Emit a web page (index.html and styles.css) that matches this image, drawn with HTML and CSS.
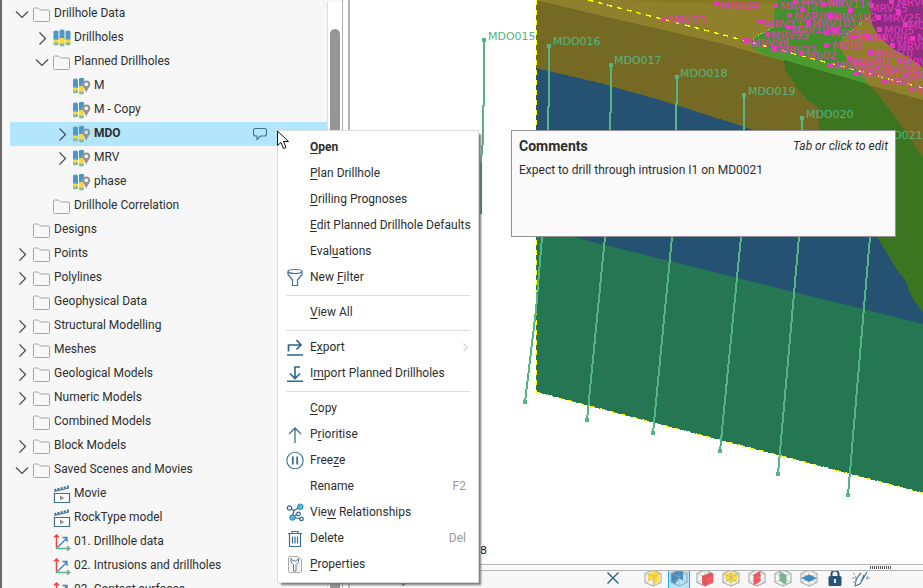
FILE: index.html
```html
<!DOCTYPE html>
<html lang="en">
<head>
<meta charset="utf-8">
<title>Drillhole project</title>
<link rel="stylesheet" href="styles.css">
</head>
<body>
<svg class="defs" aria-hidden="true">
  <symbol id="right" viewBox="0 0 16 16"><path d="M5.500 2.500l6 6-6 6" fill="none" stroke="#4a4a4a" stroke-width="1.200"/></symbol>
  <symbol id="down" viewBox="0 0 16 16"><path d="M2 5.500l6 6 6-6" fill="none" stroke="#4a4a4a" stroke-width="1.200"/></symbol>
  <symbol id="folder" viewBox="0 0 18 18"><path d="M.500 14.500V4q0-1 1-1h4l2 2h8q1 0 1 1V15.500q0 1-1 1h-14q-1 0-1-1z" fill="none" stroke="#a6a6a6"/></symbol>
  <symbol id="holes" viewBox="0 0 18 18">
    <path d="M.500 2.500q2.500-2 5 0V11h-5zM6.500 1.500q2.500-2 5 0V11h-5zM12.500 2.500q2.500-2 5 0V11h-5z" fill="#4f97c6"/>
    <path d="M.500 10.500h5v3.500h-5zM6.500 9h5v6h-5zM12.500 10.500h5v3.500h-5z" fill="#fbd93c"/>
    <path d="M.500 13.500h5v2q-2.500 2-5 0zM6.500 14.500h5v2q-2.500 2-5 0zM12.500 13.500h5v2q-2.500 2-5 0z" fill="#85bb98"/>
  </symbol>
  <symbol id="planned" viewBox="0 0 18 18">
    <path d="M0 2.500q2.500-2 5 0V11H0zM6 1.800q2.500-2 5-.5v3L9.500 7v4H6z" fill="#4f97c6"/>
    <path d="M0 10.500h5V14H0zM6 9h3.500l1.800 5.500H6z" fill="#fbd93c"/>
    <path d="M0 13.500h5v2q-2.500 2-5 0zM6 14.500h5v2q-2.500 2-5 0z" fill="#85bb98"/>
    <path d="M13.300 3.400a3.900 3.900 0 0 1 3.900 3.900c0 2.400-2.400 4.200-3.900 8.400-1.500-4.200-3.900-6-3.900-8.400a3.900 3.900 0 0 1 3.900-3.900zm0 2a1.900 1.900 0 1 0 0 3.800 1.900 1.900 0 0 0 0-3.800z" fill="#929292"/>
  </symbol>
  <symbol id="movie" viewBox="0 0 18 18">
    <path d="M1.500 8.500h15v9h-15z" fill="#fff" stroke="#3d6f93" stroke-width="1.200"/>
    <path d="M1.500 6.500L16 3" fill="none" stroke="#3d6f93"/>
    <path d="M1.500 5.200L16.500 1.200" fill="none" stroke="#3d6f93" stroke-width="2.200" stroke-dasharray="2 1.200"/>
    <path d="M7 10.500l4.500 2.500L7 15.500z" fill="#929292"/>
  </symbol>
  <symbol id="axes" viewBox="0 0 18 18">
    <path d="M3.500 15.500V2.500M1 4.500L3.500 2 6 4.500" fill="none" stroke="#e8474a" stroke-width="1.500"/>
    <path d="M4.500 14.500L14 5M9.500 4.500h4.500v4.500" fill="none" stroke="#3f7fb0" stroke-width="1.300"/>
    <path d="M3 15.500h13.500M14 13.300l2.600 2.200L14 17.700" fill="none" stroke="#5eaf84" stroke-width="1.500"/>
  </symbol>
  <symbol id="bubble" viewBox="0 0 16 16"><path d="M3.500 2.500h9q2 0 2 2v3.500q0 2-2 2H8.500L5 13.500V10H3.500q-2 0-2-2V4.500q0-2 2-2z" fill="none" stroke="#3a7396" stroke-width="1.100"/></symbol>
  <symbol id="filter" viewBox="0 0 18 18"><path d="M2 3.500v3L6.500 12v5.500h5V12L16 6.500v-3" fill="none" stroke="#3d6f93" stroke-width="1.200"/><ellipse cx="9" cy="3.500" rx="7" ry="2" fill="none" stroke="#3d6f93" stroke-width="1.200"/></symbol>
  <symbol id="export" viewBox="0 0 18 18"><path d="M2.500 13.500V7h12M10.500 2L15 7l-4.500 4.500M1 17h16" fill="none" stroke="#2f668d" stroke-width="1.700"/></symbol>
  <symbol id="import" viewBox="0 0 18 18"><path d="M14 3H9v11M4 9.500L9 14.500l5-5M1 17.200h16" fill="none" stroke="#2f668d" stroke-width="1.600"/></symbol>
  <symbol id="up" viewBox="0 0 18 18"><path d="M9 18V3M3 9l6-6 6 6" fill="none" stroke="#3d6f93" stroke-width="1.300"/></symbol>
  <symbol id="freeze" viewBox="0 0 18 18"><circle cx="9" cy="9.500" r="8.200" fill="none" stroke="#3d6f93" stroke-width="1.100"/><path d="M6.800 5.500v8M11.200 5.500v8" stroke="#3d6f93" stroke-width="1.800"/></symbol>
  <symbol id="relations" viewBox="0 0 18 18"><path d="M3.500 5L8 7.500 14 4M8 7.500L6 14M6 14l5-2.500M6 14l9 2" fill="none" stroke="#2f668d" stroke-width="1.200"/><g fill="#fff" stroke="#2f668d" stroke-width="1.200"><circle cx="3.500" cy="5" r="2.200"/><circle cx="12.500" cy="11" r="1.800"/><circle cx="15.500" cy="16" r="1.700"/></g><g fill="#49bce8" stroke="#2f668d" stroke-width=".8"><circle cx="14.300" cy="3.800" r="2.800"/><circle cx="6.500" cy="14.500" r="2.800"/></g></symbol>
  <symbol id="trash" viewBox="0 0 18 18"><path d="M2 4.500h14M6 4.500V2.500h6v2M3.500 5v12.500h11V5M6.500 7.500v7M9 7.500v7M11.500 7.500v7" fill="none" stroke="#3d6f93" stroke-width="1.200"/></symbol>
  <symbol id="props" viewBox="0 0 18 18"><path d="M2.500 2.500q0-1 1-1h8.500l3.500 3.500v11.500q0 1-1 1h-11q-1 0-1-1z" fill="#f4f4f4" stroke="#aaa"/><path d="M5 3.500V7l2.500 2.500v6.500h2.500V9.500L12.500 7V3.500L10.500 6H7z" fill="#fff" stroke="#5b7f99"/></symbol>
  <symbol id="wire" viewBox="0 0 18 18"><path d="M9 1l8 3.500v9L9 17l-8-3.500v-9z" fill="none" stroke="#a8a8a8" stroke-width="1.100"/><path d="M1 4.500L9 8l8-3.500M9 8v9M9 1v8M9 9.500l-8 4M9 9.500l8 4" fill="none" stroke="#a8a8a8" stroke-width=".6"/></symbol>
</svg>

<main class="app">
  <nav class="sidebar" aria-label="Project tree">
    <ul class="tree">
      <li class="row"><button class="toggle" aria-label="Collapse"><svg><use href="#down"/></svg></button><svg class="icon"><use href="#folder"/></svg><span>Drillhole Data</span></li>
      <li class="row l1"><button class="toggle" aria-label="Expand"><svg><use href="#right"/></svg></button><svg class="icon"><use href="#holes"/></svg><span>Drillholes</span></li>
      <li class="row l1"><button class="toggle" aria-label="Collapse"><svg><use href="#down"/></svg></button><svg class="icon"><use href="#folder"/></svg><span>Planned Drillholes</span></li>
      <li class="row l2 leaf"><svg class="icon"><use href="#planned"/></svg><span>M</span></li>
      <li class="row l2 leaf"><svg class="icon"><use href="#planned"/></svg><span>M - Copy</span></li>
      <li class="row l2 selected"><button class="toggle" aria-label="Expand"><svg><use href="#right"/></svg></button><svg class="icon"><use href="#planned"/></svg><span>MDO</span><button class="comment" aria-label="Comments"><svg><use href="#bubble"/></svg></button></li>
      <li class="row l2"><button class="toggle" aria-label="Expand"><svg><use href="#right"/></svg></button><svg class="icon"><use href="#planned"/></svg><span>MRV</span></li>
      <li class="row l2 leaf"><svg class="icon"><use href="#planned"/></svg><span>phase</span></li>
      <li class="row l1 leaf"><svg class="icon"><use href="#folder"/></svg><span>Drillhole Correlation</span></li>
      <li class="row leaf"><svg class="icon"><use href="#folder"/></svg><span>Designs</span></li>
      <li class="row"><button class="toggle" aria-label="Expand"><svg><use href="#right"/></svg></button><svg class="icon"><use href="#folder"/></svg><span>Points</span></li>
      <li class="row"><button class="toggle" aria-label="Expand"><svg><use href="#right"/></svg></button><svg class="icon"><use href="#folder"/></svg><span>Polylines</span></li>
      <li class="row leaf"><svg class="icon"><use href="#folder"/></svg><span>Geophysical Data</span></li>
      <li class="row"><button class="toggle" aria-label="Expand"><svg><use href="#right"/></svg></button><svg class="icon"><use href="#folder"/></svg><span>Structural Modelling</span></li>
      <li class="row"><button class="toggle" aria-label="Expand"><svg><use href="#right"/></svg></button><svg class="icon"><use href="#folder"/></svg><span>Meshes</span></li>
      <li class="row"><button class="toggle" aria-label="Expand"><svg><use href="#right"/></svg></button><svg class="icon"><use href="#folder"/></svg><span>Geological Models</span></li>
      <li class="row"><button class="toggle" aria-label="Expand"><svg><use href="#right"/></svg></button><svg class="icon"><use href="#folder"/></svg><span>Numeric Models</span></li>
      <li class="row leaf"><svg class="icon"><use href="#folder"/></svg><span>Combined Models</span></li>
      <li class="row"><button class="toggle" aria-label="Expand"><svg><use href="#right"/></svg></button><svg class="icon"><use href="#folder"/></svg><span>Block Models</span></li>
      <li class="row"><button class="toggle" aria-label="Collapse"><svg><use href="#down"/></svg></button><svg class="icon"><use href="#folder"/></svg><span>Saved Scenes and Movies</span></li>
      <li class="row l1 leaf"><svg class="icon"><use href="#movie"/></svg><span>Movie</span></li>
      <li class="row l1 leaf"><svg class="icon"><use href="#movie"/></svg><span>RockType model</span></li>
      <li class="row l1 leaf"><svg class="icon"><use href="#axes"/></svg><span>01. Drillhole data</span></li>
      <li class="row l1 leaf"><svg class="icon"><use href="#axes"/></svg><span>02. Intrusions and drillholes</span></li>
      <li class="row l1 leaf"><svg class="icon"><use href="#axes"/></svg><span>03. Contact surfaces</span></li>
    </ul>
    <div class="scroll"><div class="thumb"></div></div>
  </nav>

  <section class="view">
    <svg class="scene" viewBox="350 0 573 564" preserveAspectRatio="xMinYMin slice" role="img" aria-label="Geological section with planned drillholes">
      <g shape-rendering="crispEdges">
        <path d="M536 0H923V493L536 392z" fill="#756a24"/>
        <path d="M536 0H923V100L836 76 720 43 620 20z" fill="#8f802b"/>
        <path d="M620 0H923V6L720 4z" fill="#887923"/>
        <path d="M536 68L600 83 660 100 720 119 754 130 830 153 923 180V324L573 237 536 228z" fill="#255273"/>
        <path d="M536 228L573 237 923 324V493L536 392z" fill="#257652"/>
        <path d="M784 60L868 84 880 97 892 113 906 132 923 158V313L912 297 905 280 896 268 877 237 850 200 819 160V108L805 98 796 86 785 70z" fill="#3b7520"/>
        <path d="M777 0H873L870 15 843 38 840 46 848 62 860 73 868 84 784 60 768 56 754 50 750 44 755 37 773 27 774 14z" fill="#43902c"/>
        <path d="M753 43L862 73 868 84 784 60 768 56 754 50z" fill="#4b9a31"/>
        <path d="M869 0H923V68L910 58 895 50 880 38 872 24z" fill="#8b2d83"/>
        <path d="M843 38L870 15M750 44l5-7 18-10" fill="none" stroke="#c9d44a" stroke-dasharray="1 2"/>
        <path d="M588 0L720 34 923 88" fill="none" stroke="#ff0" stroke-width="1.400" stroke-dasharray="5 5"/>
        <path d="M536.500 0V392" stroke="#ff0" stroke-width="1" stroke-dasharray="5 5"/>
        <path d="M536 392L923 493" stroke="#ff0" stroke-width="1.200" stroke-dasharray="5 6"/>
        <g fill="none" stroke="#54b681" stroke-width="2">
          <path d="M484 40V105L483 106V140L481 160V180"/>
          <path d="M481 163V214" stroke="#2f8159"/>
          <path d="M549 46V106L548 107V130L542 237 536 310 525 402"/>
          <path d="M611 65V112L610 113V130L605 237 587 420"/>
          <path d="M677 77V103L676 104V130L672 237 653 433"/>
          <path d="M744 95V130L741 237 720 451"/>
          <path d="M802 118V130L799 237 778 474"/>
          <path d="M873 150L870 237 848 495"/>
        </g>
        <path d="M482 38h4v4h-4zM547 44h4v4h-4zM609 63h4v4h-4zM675 75h4v4h-4zM742 93h4v4h-4zM800 116h4v4h-4zM523 400h4v4h-4zM585 418h4v4h-4zM651 431h4v4h-4zM718 449h4v4h-4zM776 472h4v4h-4zM846 493h4v4h-4z" fill="#54b681"/>
        <path class="pins" d="M661 17h5v5h-5zM714 1h5v5h-5zM773 3h5v5h-5zM793 0h5v4h-5zM787 13h5v5h-5zM800 7h5v5h-5zM821 2h5v5h-5zM828 14h5v5h-5zM848 8h5v5h-5zM758 19h5v5h-5zM806 20h5v5h-5zM786 25h5v5h-5zM765 32h5v5h-5zM824 30h5v5h-5zM834 28h5v5h-5zM744 38h5v5h-5zM772 46h5v5h-5zM799 51h5v5h-5zM824 43h5v5h-5zM850 35h5v5h-5zM865 34h5v5h-5zM869 3h5v5h-5zM876 15h5v5h-5zM889 0h5v4h-5zM896 10h5v5h-5zM903 22h5v5h-5zM877 27h5v5h-5zM890 43h5v5h-5zM910 36h5v5h-5zM868 50h5v5h-5zM847 56h5v5h-5zM828 63h5v5h-5zM854 71h5v5h-5zM875 65h5v5h-5zM897 58h5v5h-5zM903 73h5v5h-5zM882 79h5v5h-5zM909 87h5v5h-5z"/>
      </g>
      <g class="holes">
        <text x="488" y="40">MDO015</text><text x="553" y="45">MDO016</text><text x="614" y="64">MDO017</text><text x="680" y="77">MDO018</text><text x="748" y="95">MDO019</text><text x="806" y="118">MDO020</text><text x="875" y="139">MDO021</text>
      </g>
      <g class="marks">
        <text x="668" y="24">MRV33</text><text x="721" y="9">MRV34</text><text x="780" y="10">MRV12</text><text x="800" y="5">MRV107</text><text x="794" y="20">MAR069</text><text x="828" y="8">MRV114</text><text x="832" y="21">MRV102</text><text x="765" y="28">MRV111</text><text x="812" y="27">MRV101</text><text x="791" y="33">MRV106</text><text x="771" y="39">MRV99</text><text x="830" y="37">MRV97</text><text x="751" y="47">MRV98</text><text x="779" y="54">MRV23</text><text x="806" y="59">Mb02</text><text x="832" y="49">M003</text><text x="856" y="42">M004</text><text x="884" y="34">M005</text><text x="883" y="22">MRV25</text><text x="897" y="6">MRV04</text><text x="870" y="12">MRV45</text><text x="908" y="29">M006</text><text x="872" y="42">MRV86</text><text x="897" y="50">MRV84</text><text x="917" y="42">M</text><text x="875" y="57">MRV70</text><text x="853" y="65">MRV69</text><text x="835" y="69">MRV68</text><text x="860" y="78">MRV94</text><text x="882" y="73">MRV60</text><text x="903" y="66">MRV</text><text x="908" y="79">MR</text><text x="888" y="86">MRV1</text><text x="916" y="94">M</text>
      </g>
      <text class="scale" x="473" y="554">48</text>
    </svg>
    <div class="splitter"><span class="grip"></span></div>
    <div class="toolbar" role="toolbar" aria-label="Scene">
      <button class="tool search" aria-label="Search"><svg viewBox="0 0 18 18"><path d="M2 16l5-4" stroke="#2a5f85" stroke-width="3"/><circle cx="11" cy="8" r="5" fill="none" stroke="#2a5f85" stroke-width="2"/></svg></button>
      <button class="tool close" aria-label="Clear"><svg viewBox="0 0 18 18"><path d="M3.500 3.500l11 11M14.500 3.500l-11 11" stroke="#2a5f85" stroke-width="1.400"/></svg></button>
      <button class="tool" aria-label="Slicer"><svg viewBox="0 0 18 18"><use href="#wire"/><path d="M4 5l6-3.500 5 3V12l-5 3.500V9l-6 4z" fill="#fbda3e"/><path d="M10 15.500V7.500l5-3M10 7.500L4 5" fill="none" stroke="#c9b65a" stroke-width=".7"/></svg></button>
      <button class="tool active" aria-label="Remove front"><svg viewBox="0 0 18 18"><path d="M1 4.500L9 1l4 2v8L9 9.500 5 15l-4-2z" fill="#3f8ac0"/><use href="#wire"/></svg></button>
      <button class="tool" aria-label="Remove back"><svg viewBox="0 0 18 18"><use href="#wire"/><path d="M6 7l8-3.500 3 1.500v8.500L9.500 17 6 15.500z" fill="#ea5a60"/><path d="M6 7l3.500 1.500V17M9.500 8.500L17 5" fill="none" stroke="#b7585c" stroke-width=".7"/></svg></button>
      <button class="tool" aria-label="Thick slice"><svg viewBox="0 0 18 18"><path d="M2 5l7-2 7 2-1.500 7.500L9 14l-5-2z" fill="#fbda3e"/><use href="#wire"/></svg></button>
      <button class="tool" aria-label="Slice north"><svg viewBox="0 0 18 18"><use href="#wire"/><path d="M5.500 5.500L12.500 2v10.500l-7 4z" fill="#ea5a60"/><path d="M9 9.500l3.500-2" stroke="#a8a8a8"/></svg></button>
      <button class="tool" aria-label="Slice east"><svg viewBox="0 0 18 18"><use href="#wire"/><path d="M5.500 2.500l7 3.500v10l-7-4z" fill="#77b394"/><path d="M9 9.500L5.500 8" stroke="#a8a8a8"/></svg></button>
      <button class="tool" aria-label="Slice level"><svg viewBox="0 0 18 18"><use href="#wire"/><path d="M1 9l8-3.500L17 9l-8 4z" fill="#3f8ac0"/></svg></button>
      <button class="tool" aria-label="Lock"><svg viewBox="0 0 18 18"><path d="M5.500 8V5a3.500 3.500 0 0 1 7 0v3" fill="none" stroke="#245477" stroke-width="2"/><rect x="2.500" y="7" width="13" height="10" rx="1.500" fill="#245477"/><path d="M9 10v4" stroke="#fff" stroke-width="1.800"/></svg></button>
      <button class="tool" aria-label="Snap to"><svg viewBox="0 0 18 18"><path d="M3 17c1-7 2-9 6-13M8 15L15 3M3 17l5-2M9 13l3-7" fill="none" stroke="#3f6f90" stroke-width="1.100"/><path d="M0 9h5M3 7l2 2-2 2M18 9h-4M16 7l-2 2 2 2M1 4l2 2M1 14l2-2" fill="none" stroke="#999"/></svg></button>
    </div>
  </section>
</main>

<section class="popup" aria-label="Comments">
  <header><h2>Comments</h2><em>Tab or click to edit</em></header>
  <p>Expect to drill through intrusion I1 on MD0021</p>
</section>

<div class="menu" role="menu">
  <button role="menuitem" class="strong"><i></i><span><u>O</u>pen</span></button>
  <button role="menuitem"><i></i><span><u>P</u>lan Drillhole</span></button>
  <button role="menuitem"><i></i><span><u>D</u>rilling Prognoses</span></button>
  <button role="menuitem"><i></i><span><u>E</u>dit Planned Drillhole Defaults</span></button>
  <button role="menuitem"><i></i><span>Eval<u>u</u>ations</span></button>
  <button role="menuitem"><svg class="icon"><use href="#filter"/></svg><span>New <u>F</u>ilter</span></button>
  <hr>
  <button role="menuitem"><i></i><span><u>V</u>iew All</span></button>
  <hr>
  <button role="menuitem"><svg class="icon"><use href="#export"/></svg><span>E<u>x</u>port</span><svg class="more"><use href="#right"/></svg></button>
  <button role="menuitem"><svg class="icon"><use href="#import"/></svg><span>I<u>m</u>port Planned Drillholes</span></button>
  <hr>
  <button role="menuitem"><i></i><span><u>C</u>opy</span></button>
  <button role="menuitem"><svg class="icon"><use href="#up"/></svg><span>P<u>r</u>ioritise</span></button>
  <button role="menuitem"><svg class="icon"><use href="#freeze"/></svg><span>Free<u>z</u>e</span></button>
  <button role="menuitem"><i></i><span>Rename</span><kbd>F2</kbd></button>
  <button role="menuitem"><svg class="icon"><use href="#relations"/></svg><span>Vie<u>w</u> Relationships</span></button>
  <button role="menuitem"><svg class="icon"><use href="#trash"/></svg><span>Delete</span><kbd>Del</kbd></button>
  <button role="menuitem"><svg class="icon"><use href="#props"/></svg><span><u>P</u>roperties</span></button>
</div>
<svg class="cursor" viewBox="0 0 13 20" aria-hidden="true"><path d="M.500 1v14.500L4 12.500 6.500 18.500l2.500-1L6.500 11.500h5z" fill="#fff" stroke="#111"/></svg>
</body>
</html>
```
FILE: styles.css
```css
* { box-sizing: border-box; }
body {
  margin: 0;
  font: 12px/16px Roboto, "Liberation Sans", sans-serif;
  color: #2e2e2e;
  background: #fff;
  overflow: hidden;
}
button { border: 0; padding: 0; background: none; font: inherit; color: inherit; }
svg { display: block; flex: none; }
.defs { position: absolute; width: 0; height: 0; }
.app { display: flex; height: 100vh; }

.sidebar {
  display: flex;
  flex: 0 0 343px;
  border-left: 2px solid #6b6b6b;
  border-right: 1px solid #b0b0b0;
  background: #f7f7f7;
  overflow: hidden;
}
.tree { flex: 1; margin: 0; padding: 2px 0 0 8px; list-style: none; }
.row { display: flex; align-items: center; gap: 3px; height: 24px; padding-left: 4px; }
.row span { padding-bottom: 2px; white-space: nowrap; }
.l1 { padding-left: 24px; }
.l2 { padding-left: 44px; }
.leaf::before { content: ""; width: 16px; }
.toggle svg, .comment svg { width: 16px; height: 16px; }
.icon { width: 18px; height: 18px; }
.selected { background: #b3e5fc; font-weight: 700; }
.comment { margin-left: auto; margin-right: 59px; }
.scroll { flex: 0 0 15px; margin-top: 2px; padding: 27px 2px 0; border-left: 1px solid #ddd; background: #fff; }
.thumb { height: 100%; border-radius: 5px 5px 0 0; background: #969696; }

.view { display: flex; flex: 1; flex-direction: column; min-width: 0; margin-left: 5px; border-left: 2px solid #b4b4b4; }
.scene { flex: 1; width: 100%; min-height: 0; }
.scene text { font: 11px "DejaVu Sans", sans-serif; }
.holes { fill: #54b681; }
.marks, .pins { fill: #e837bd; }
.scene .scale { fill: #111; }
.splitter { display: flex; justify-content: flex-end; height: 7px; padding: 1px 31px 0; border: 1px solid #b4b4b4; border-width: 1px 0; background: #fafafa; }
.grip { width: 22px; height: 3px; background: repeating-linear-gradient(90deg, #555 0 1px, #fafafa 1px 2px); }
.toolbar { display: flex; flex: 0 0 17px; justify-content: flex-end; align-items: center; gap: 4px; padding-right: 51px; background: #f7f7f7; overflow: hidden; }
.tool { display: flex; justify-content: center; width: 22px; height: 18px; }
.tool svg { width: 18px; height: 18px; margin-top: -2px; }
.search { margin-right: auto; margin-left: 48px; }
.close { margin-right: 14px; }
.active { border: 1px solid #1caae8; border-width: 0 1px; background: #b3e5fc; }

.popup {
  position: absolute;
  left: 511px;
  top: 130px;
  width: 385px;
  height: 107px;
  padding: 7px;
  border: 1px solid #929292;
  background: #fafafa;
}
.popup header { display: flex; justify-content: space-between; }
.popup h2 { margin: 0; font-size: 14px; line-height: 16px; }
.popup p { margin: 8px 0 0; }

.menu {
  position: absolute;
  left: 277px;
  top: 130px;
  width: 202px;
  padding: 3px 8px 5px;
  border: 1px solid #dcdcdc;
  background: #fff;
  box-shadow: 3px 3px 2px -1px #777;
}
.menu button { display: flex; align-items: center; gap: 6px; width: 100%; height: 26px; text-align: left; white-space: nowrap; }
.menu i { flex: 0 0 18px; }
.menu hr { height: 1px; margin: 5px 0 3px; border: 0; background: #ddd; }
.menu u { text-underline-offset: 2px; text-decoration-thickness: 1px; }
.menu kbd { margin-left: auto; margin-right: 4px; font: inherit; color: #9a9a9a; }
.menu .strong { font-weight: 700; }
.more { width: 10px; height: 10px; margin-left: auto; opacity: 0.5; }
.cursor { position: absolute; left: 277px; top: 130px; width: 13px; height: 20px; }
```
